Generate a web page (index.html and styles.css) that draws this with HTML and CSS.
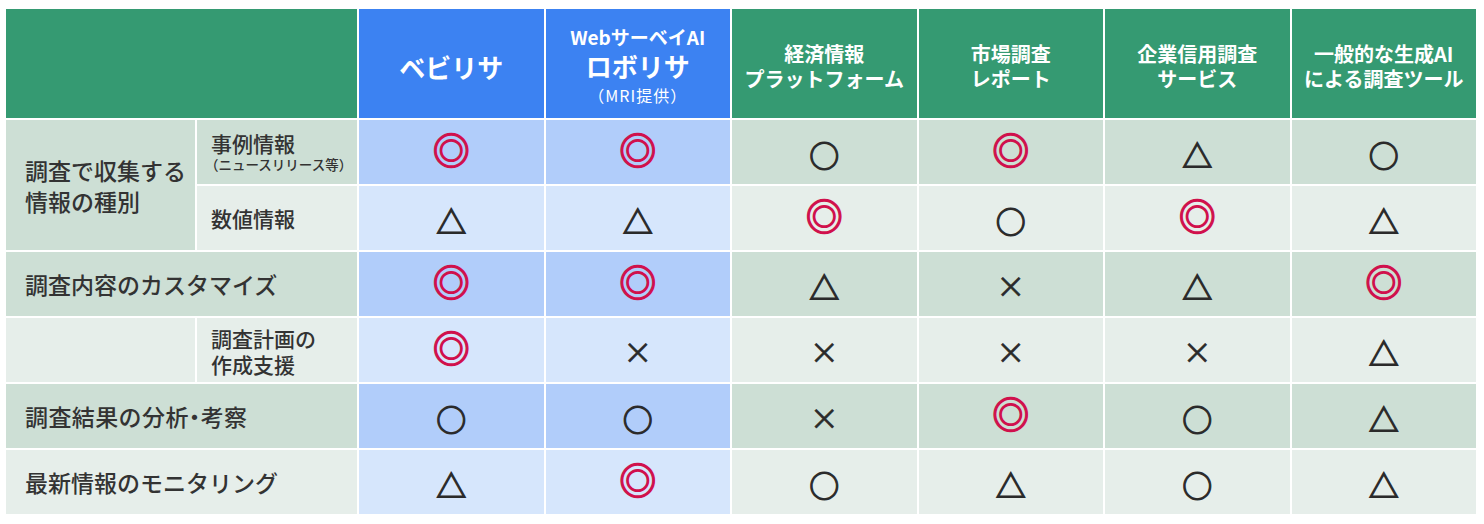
FILE: index.html
```html
<!DOCTYPE html>
<html lang="ja">
<head>
<meta charset="utf-8">
<title>比較表</title>
<link rel="stylesheet" href="styles.css">
</head>
<body>
<div class="table">
  <div class="hd hd-green hd-corner"></div>
  <div class="hd hd-blue"><span class="hd-big">ベビリサ</span></div>
  <div class="hd hd-blue hd-stack">
    <span class="hd-small">WebサーベイAI</span>
    <span class="hd-big">ロボリサ</span>
    <span class="hd-note">（MRI提供）</span>
  </div>
  <div class="hd hd-green"><span class="hd-line">経済情報</span><span class="hd-line">プラットフォーム</span></div>
  <div class="hd hd-green"><span class="hd-line">市場調査</span><span class="hd-line">レポート</span></div>
  <div class="hd hd-green"><span class="hd-line">企業信用調査</span><span class="hd-line">サービス</span></div>
  <div class="hd hd-green"><span class="hd-line">一般的な生成AI</span><span class="hd-line">による調査ツール</span></div>

  <!-- row 1 -->
  <div class="lab lab-tall g-d"><span class="lab-line">調査で収集する</span><span class="lab-line">情報の種別</span></div>
  <div class="sub g-d"><span>事例情報</span><span class="note">（ニュースリリース等）</span></div>
  <div class="cell b-d"><span class="sym dbl">◎</span></div>
  <div class="cell b-d"><span class="sym dbl">◎</span></div>
  <div class="cell g-d"><span class="sym cir">○</span></div>
  <div class="cell g-d"><span class="sym dbl">◎</span></div>
  <div class="cell g-d"><span class="sym tri">△</span></div>
  <div class="cell g-d"><span class="sym cir">○</span></div>

  <!-- row 2 -->
  <div class="sub g-l"><span>数値情報</span></div>
  <div class="cell b-l"><span class="sym tri">△</span></div>
  <div class="cell b-l"><span class="sym tri">△</span></div>
  <div class="cell g-l"><span class="sym dbl">◎</span></div>
  <div class="cell g-l"><span class="sym cir">○</span></div>
  <div class="cell g-l"><span class="sym dbl">◎</span></div>
  <div class="cell g-l"><span class="sym tri">△</span></div>

  <!-- row 3 -->
  <div class="lab lab-wide g-d">調査内容のカスタマイズ</div>
  <div class="cell b-d"><span class="sym dbl">◎</span></div>
  <div class="cell b-d"><span class="sym dbl">◎</span></div>
  <div class="cell g-d"><span class="sym tri">△</span></div>
  <div class="cell g-d"><span class="sym crs">×</span></div>
  <div class="cell g-d"><span class="sym tri">△</span></div>
  <div class="cell g-d"><span class="sym dbl">◎</span></div>

  <!-- row 4 -->
  <div class="lab g-l"></div>
  <div class="sub sub-two g-l"><span>調査計画の</span><span>作成支援</span></div>
  <div class="cell b-l"><span class="sym dbl">◎</span></div>
  <div class="cell b-l"><span class="sym crs">×</span></div>
  <div class="cell g-l"><span class="sym crs">×</span></div>
  <div class="cell g-l"><span class="sym crs">×</span></div>
  <div class="cell g-l"><span class="sym crs">×</span></div>
  <div class="cell g-l"><span class="sym tri">△</span></div>

  <!-- row 5 -->
  <div class="lab lab-wide lab-halt g-d">調査結果の分析・考察</div>
  <div class="cell b-d"><span class="sym cir">○</span></div>
  <div class="cell b-d"><span class="sym cir">○</span></div>
  <div class="cell g-d"><span class="sym crs">×</span></div>
  <div class="cell g-d"><span class="sym dbl">◎</span></div>
  <div class="cell g-d"><span class="sym cir">○</span></div>
  <div class="cell g-d"><span class="sym tri">△</span></div>

  <!-- row 6 -->
  <div class="lab lab-wide g-l">最新情報のモニタリング</div>
  <div class="cell b-l"><span class="sym tri">△</span></div>
  <div class="cell b-l"><span class="sym dbl">◎</span></div>
  <div class="cell g-l"><span class="sym cir">○</span></div>
  <div class="cell g-l"><span class="sym tri">△</span></div>
  <div class="cell g-l"><span class="sym cir">○</span></div>
  <div class="cell g-l"><span class="sym tri">△</span></div>
</div>
</body>
</html>
```

FILE: styles.css
```css
* { box-sizing: border-box; }

html, body {
  margin: 0;
  background: #ffffff;
}

body {
  padding: 9px 0 0 6px;
  font-family: "Noto Sans CJK JP", "Noto Sans", sans-serif;
  color: #333333;
}

.table {
  display: grid;
  width: 1470px;
  grid-template-columns: 189px 160px repeat(6, 1fr);
  grid-template-rows: 109px repeat(6, 64px);
  gap: 2px;
}

/* header */
.hd {
  display: flex;
  flex-direction: column;
  align-items: center;
  justify-content: center;
  color: #ffffff;
  font-weight: 700;
  text-align: center;
}
.hd-green { background: #359a72; }
.hd-blue { background: #3c82f2; }
.hd-corner { grid-column: span 2; }

.hd-big {
  font-size: 26px;
  line-height: 30px;
  padding-top: 6px;
}
.hd-stack .hd-big { padding-top: 0; margin-top: 1px; }
.hd-stack { padding-top: 2px; }
.hd-small {
  font-size: 19px;
  line-height: 26px;
}
.hd-note {
  font-size: 16px;
  font-weight: 400;
  letter-spacing: 1px;
  line-height: 22px;
  margin-top: 3px;
}
.hd-line {
  display: block;
  font-size: 20px;
  line-height: 25px;
}
.hd-line:first-child { margin-top: 4px; }

/* row colours */
.b-d { background: #b1cdfa; }
.b-l { background: #d6e6fc; }
.g-d { background: #cddfd5; }
.g-l { background: #e6eeea; }

/* labels */
.lab {
  display: flex;
  align-items: center;
  padding-left: 19px;
  font-size: 23px;
  font-weight: 500;
  line-height: 31px;
  color: #333333;
}
.lab-tall {
  grid-row: span 2;
  flex-direction: column;
  align-items: flex-start;
  justify-content: center;
  padding-top: 2px;
}
.lab-line { display: block; }
.lab-wide { grid-column: span 2; }
.lab-halt { font-feature-settings: "halt" 1; letter-spacing: 0.4px; }

.sub {
  display: flex;
  flex-direction: column;
  justify-content: center;
  padding-left: 14px;
  font-size: 21px;
  font-weight: 500;
  line-height: 24px;
  color: #333333;
}
.sub-two { line-height: 26px; padding-top: 2px; }
.note {
  font-size: 13.5px;
  line-height: 17px;
  margin-left: -6px;
  margin-top: 1px;
}

/* symbols */
.cell {
  display: flex;
  align-items: center;
  justify-content: center;
}
.sym {
  font-weight: 700;
  line-height: 1;
  color: #2a2a2a;
  -webkit-text-stroke: 1.1px currentColor;
}
.dbl {
  font-size: 37px;
  color: #d0104c;
  margin-bottom: 6px;
  -webkit-text-stroke: 1.3px currentColor;
}
.cir {
  font-size: 30px;
  margin-top: 3px;
}
.tri {
  font-size: 30px;
  margin-top: 4px;
}
.crs {
  font-size: 29px;
  font-weight: 400;
  margin-top: 3px;
  -webkit-text-stroke: 0.6px currentColor;
}
```
